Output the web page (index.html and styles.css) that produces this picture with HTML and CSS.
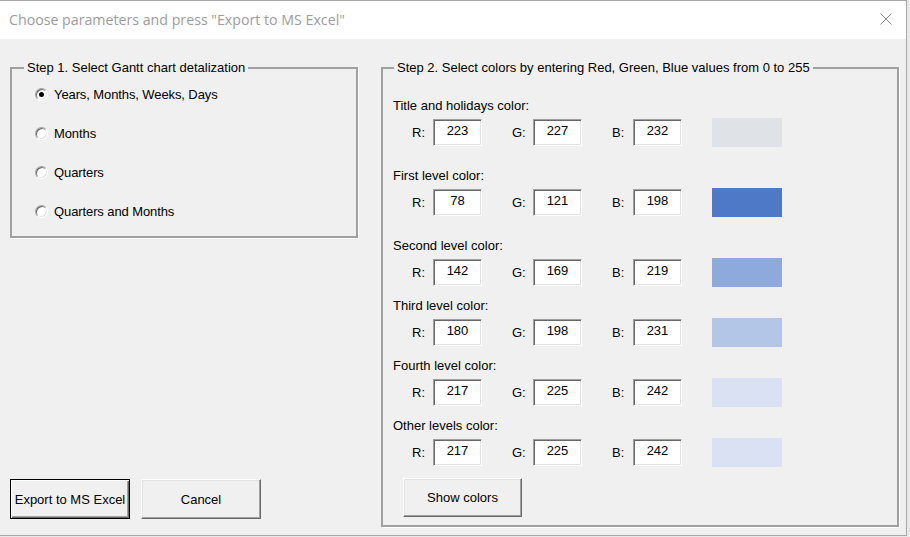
FILE: index.html
```html
<!DOCTYPE html>
<html lang="en">
<head>
    <meta charset="UTF-8">
    <meta name="viewport" content="width=device-width, initial-scale=1.0">
    <title>Export to MS Excel</title>
    <link rel="stylesheet" href="styles.css">
</head>
<body>
    <div class="window">
        <div class="title-bar">
            <span class="title">Choose parameters and press "Export to MS Excel"</span>
            <svg class="close" width="12" height="12" viewBox="0 0 12 12">
                <path d="M0.5 0.5 L11.5 11.5 M11.5 0.5 L0.5 11.5" stroke="#8a8a8a" stroke-width="1" fill="none"/>
            </svg>
        </div>

        <div class="dialog">
            <div class="left-column">
                <fieldset class="frame frame-detail">
                    <legend>Step 1. Select Gantt chart detalization</legend>
                    <label class="option"><input type="radio" name="detail" checked><span>Years, Months, Weeks, Days</span></label>
                    <label class="option"><input type="radio" name="detail"><span>Months</span></label>
                    <label class="option"><input type="radio" name="detail"><span>Quarters</span></label>
                    <label class="option"><input type="radio" name="detail"><span>Quarters and Months</span></label>
                </fieldset>

                <div class="actions">
                    <button class="btn btn-default">Export to MS Excel</button>
                    <button class="btn">Cancel</button>
                </div>
            </div>

            <fieldset class="frame frame-colors">
                <legend>Step 2. Select colors by entering Red, Green, Blue values from 0 to 255</legend>
                <div class="frame-body">
                    <div class="color-group">
                        <div class="group-title">Title and holidays color:</div>
                        <div class="color-row">
                            <label class="channel"><span>R:</span><input type="text" value="223"></label>
                            <label class="channel"><span>G:</span><input type="text" value="227"></label>
                            <label class="channel"><span>B:</span><input type="text" value="232"></label>
                            <div class="swatch" style="background-color: rgb(223, 227, 232);"></div>
                        </div>
                    </div>
                    <div class="color-group">
                        <div class="group-title">First level color:</div>
                        <div class="color-row">
                            <label class="channel"><span>R:</span><input type="text" value="78"></label>
                            <label class="channel"><span>G:</span><input type="text" value="121"></label>
                            <label class="channel"><span>B:</span><input type="text" value="198"></label>
                            <div class="swatch" style="background-color: rgb(78, 121, 198);"></div>
                        </div>
                    </div>
                    <div class="color-group">
                        <div class="group-title">Second level color:</div>
                        <div class="color-row">
                            <label class="channel"><span>R:</span><input type="text" value="142"></label>
                            <label class="channel"><span>G:</span><input type="text" value="169"></label>
                            <label class="channel"><span>B:</span><input type="text" value="219"></label>
                            <div class="swatch" style="background-color: rgb(142, 169, 219);"></div>
                        </div>
                    </div>
                    <div class="color-group tight">
                        <div class="group-title">Third level color:</div>
                        <div class="color-row">
                            <label class="channel"><span>R:</span><input type="text" value="180"></label>
                            <label class="channel"><span>G:</span><input type="text" value="198"></label>
                            <label class="channel"><span>B:</span><input type="text" value="231"></label>
                            <div class="swatch" style="background-color: rgb(180, 198, 231);"></div>
                        </div>
                    </div>
                    <div class="color-group tight">
                        <div class="group-title">Fourth level color:</div>
                        <div class="color-row">
                            <label class="channel"><span>R:</span><input type="text" value="217"></label>
                            <label class="channel"><span>G:</span><input type="text" value="225"></label>
                            <label class="channel"><span>B:</span><input type="text" value="242"></label>
                            <div class="swatch" style="background-color: rgb(217, 225, 242);"></div>
                        </div>
                    </div>
                    <div class="color-group tight">
                        <div class="group-title">Other levels color:</div>
                        <div class="color-row">
                            <label class="channel"><span>R:</span><input type="text" value="217"></label>
                            <label class="channel"><span>G:</span><input type="text" value="225"></label>
                            <label class="channel"><span>B:</span><input type="text" value="242"></label>
                            <div class="swatch" style="background-color: rgb(217, 225, 242);"></div>
                        </div>
                    </div>

                    <button class="btn btn-show">Show colors</button>
                </div>
            </fieldset>
        </div>
    </div>
</body>
</html>
```

FILE: styles.css
```css
body {
    margin: 0;
    background-color: #e9e9e9;
    font-family: 'Liberation Sans', Arial, sans-serif;
    font-size: 13px;
    color: #000;
}
.window {
    width: 906px;
    height: 534px;
    background-color: #f0f0f0;
    border-top: 1px solid #a8a8a8;
    border-right: 1px solid #a8a8a8;
    border-bottom: 1px solid #a8a8a8;
}

/* Titulek okna */
.title-bar {
    height: 38px;
    background-color: #fff;
    display: flex;
    align-items: center;
    justify-content: space-between;
    padding: 0 14px 0 9px;
}
.title {
    font-family: 'Open Sans', sans-serif;
    font-size: 14.2px;
    color: #9d9d9d;
    margin-top: -2px;
}
.close {
    margin-top: -2px;
}

.dialog {
    display: flex;
    gap: 23px;
    padding: 20px 0 0 10px;
}
.left-column {
    display: flex;
    flex-direction: column;
    width: 348px;
}

/* Rámečky (frame) */
.frame {
    margin: 0;
    padding: 0;
    min-width: 0;
    border: 2px solid #a0a0a0;
    box-shadow: 1px 1px 0 #fff;
}
.frame legend {
    padding: 0 3px;
    line-height: 17px;
}
.frame-detail {
    padding-bottom: 5px;
}
.frame-detail legend {
    margin-left: 12px;
}
.frame-colors {
    width: 518px;
    box-sizing: border-box;
}
.frame-colors legend {
    margin-left: 11px;
}
.frame-body {
    padding: 22px 0 8px 10px;
}

/* Přepínače */
.option {
    display: flex;
    align-items: center;
    height: 39px;
    padding-left: 23px;
    letter-spacing: -0.1px;
}
.option:first-of-type {
    margin-top: -1px;
}
.option input {
    appearance: none;
    width: 13px;
    height: 13px;
    margin: 0 6px 0 0;
    border-radius: 50%;
    border: 1px solid;
    border-color: #a0a0a0 #fff #fff #a0a0a0;
    background-color: #fff;
    box-shadow: inset 1px 1px 0 #696969, inset -1px -1px 0 #e3e3e3;
    display: grid;
    place-items: center;
}
.option input:checked::after {
    content: "";
    width: 5px;
    height: 5px;
    border-radius: 50%;
    background-color: #000;
}

/* Barvy */
.color-group + .color-group {
    margin-top: 21px;
}
.color-group.tight {
    margin-top: 11px;
}
.group-title {
    line-height: 16px;
    margin-bottom: 4px;
}
.color-row {
    display: flex;
    align-items: center;
    height: 29px;
    padding-left: 19px;
}
.channel {
    display: flex;
    align-items: center;
    width: 100px;
}
.channel span {
    width: 21px;
}
.channel input {
    width: 49px;
    height: 27px;
    box-sizing: border-box;
    margin: 0;
    padding: 0 0 4px;
    border: 1px solid;
    border-color: #a0a0a0 #fff #fff #a0a0a0;
    box-shadow: inset 1px 1px 0 #696969, inset -1px -1px 0 #e3e3e3;
    background-color: #fff;
    font-family: inherit;
    font-size: 13px;
    text-align: center;
    outline: none;
}
.swatch {
    width: 70px;
    height: 29px;
}

/* Tlačítka */
.btn {
    height: 40px;
    width: 120px;
    margin: 0;
    padding: 0;
    font-family: inherit;
    font-size: 13px;
    color: #000;
    background-color: #f0f0f0;
    border: 1px solid;
    border-color: #fff #696969 #696969 #fff;
    box-shadow: inset -1px -1px 0 #a0a0a0, inset 1px 1px 0 #e3e3e3;
}
.btn-default {
    border-color: #000;
    box-shadow: inset 1px 1px 0 #fff, inset -1px -1px 0 #696969, inset -2px -2px 0 #a0a0a0;
}
.actions {
    display: flex;
    gap: 11px;
    margin-top: auto;
    margin-bottom: 8px;
}
.btn-show {
    display: block;
    width: 119px;
    height: 39px;
    margin: 11px 0 0 10px;
}
```
